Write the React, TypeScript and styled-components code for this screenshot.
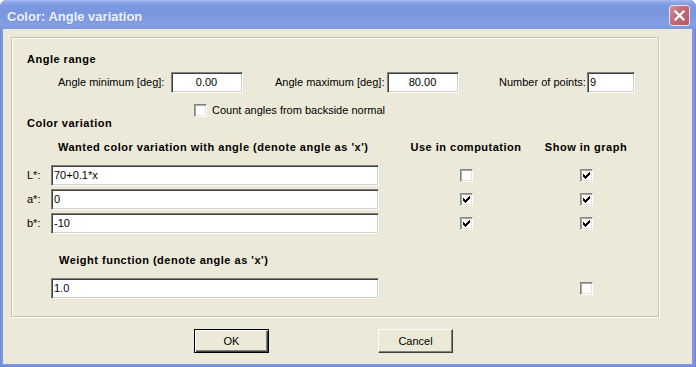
import {Fragment} from "react";
import styled, {createGlobalStyle} from "styled-components";

const GlobalStyle = createGlobalStyle`
    html, body {
        margin: 0;
        padding: 0;
        background: #fff;
    }
    body {
        font-family: "Liberation Sans", Arial, sans-serif;
        font-size: 11px;
        color: #000;
    }
`

type Row = {
    label: string;
    value: string;
    use: boolean;
    show: boolean;
}

const rows: Row[] = [
    {label: "L*:", value: "70+0.1*x", use: false, show: true},
    {label: "a*:", value: "0", use: true, show: true},
    {label: "b*:", value: "-10", use: true, show: true},
];

function CheckBox({checked}: { checked?: boolean }) {
    return <Box>
        {checked &&
            <svg width="7" height="7" viewBox="0 0 7 7" shapeRendering="crispEdges">
                <polygon fill="#000"
                         points="0,2 1,2 1,3 2,3 2,4 3,4 3,3 4,3 4,2 5,2 5,1 6,1 6,0 7,0 7,3 6,3 6,4 5,4 5,5 4,5 4,6 3,6 3,7 2,7 2,6 1,6 1,5 0,5"/>
            </svg>}
    </Box>
}

function App() {
    return <>
        <GlobalStyle/>
        <Window>
            <TitleBar>
                <Title>Color: Angle variation</Title>
                <CloseButton>
                    <svg width="19" height="19" viewBox="0 0 19 19">
                        <path d="M5.5 5.5 L13.5 13.5 M13.5 5.5 L5.5 13.5" stroke="#fff" strokeWidth="2.2"
                              strokeLinecap="square"/>
                    </svg>
                </CloseButton>
            </TitleBar>
            <Frame>
                <GroupBox>
                    <SectionTitle>Angle range</SectionTitle>
                    <RangeRow>
                        <Field $w={185} $gap={31}>
                            <span>Angle minimum [deg]:</span>
                            <TextBox $w={72} $align="center">0.00</TextBox>
                        </Field>
                        <Field $w={184} $gap={32}>
                            <span>Angle maximum [deg]:</span>
                            <TextBox $w={72} $align="center">80.00</TextBox>
                        </Field>
                        <Field $w={136} $gap={40}>
                            <span>Number of points:</span>
                            <TextBox $w={48} $align="left">9</TextBox>
                        </Field>
                    </RangeRow>
                    <CheckRow>
                        <CheckBox/>
                        <span>Count angles from backside normal</span>
                    </CheckRow>
                    <SectionTitle>Color variation</SectionTitle>
                    <ColorGrid>
                        <HeadText $indent={7} $top={0}>Wanted color variation with angle (denote angle as 'x')</HeadText>
                        <ColHead $col={3}>Use in computation</ColHead>
                        <ColHead $col={4}>Show in graph</ColHead>
                        {rows.map(r => <Fragment key={r.label}>
                            <RowLabel>{r.label}</RowLabel>
                            <TextBox $align="left">{r.value}</TextBox>
                            <CheckCell $col={3}><CheckBox checked={r.use}/></CheckCell>
                            <CheckCell $col={4}><CheckBox checked={r.show}/></CheckCell>
                        </Fragment>)}
                        <HeadText $indent={8} $top={17}>Weight function (denote angle as 'x')</HeadText>
                        <RowLabel/>
                        <TextBox $align="left">1.0</TextBox>
                        <CheckCell $col={4}><CheckBox/></CheckCell>
                    </ColorGrid>
                </GroupBox>
                <ButtonRow>
                    <DialogButton $default={true}>OK</DialogButton>
                    <DialogButton>Cancel</DialogButton>
                </ButtonRow>
            </Frame>
        </Window>
    </>
}

export default App;

const Window = styled.div`
    width: 696px;
    height: 367px;
    display: flex;
    flex-direction: column;
    background: #7c97df;
    border-radius: 7px 7px 0 0;
    overflow: hidden;
    box-sizing: border-box;
    box-shadow: inset 1px 0 0 #6f8bd6, inset -1px 0 0 #6a86d2, inset 0 -1px 0 #6a86d2;
`
const TitleBar = styled.div`
    height: 29px;
    flex-shrink: 0;
    display: flex;
    justify-content: space-between;
    align-items: flex-start;
    padding: 5px 6px 0 7px;
    box-sizing: border-box;
    background: linear-gradient(to bottom, #aabdf0 0, #8ea8e8 2px, #7c98e0 6px, #7a96df 45%, #839ee3 80%, #7d98e0 100%);
`
const Title = styled.div`
    margin-top: 4px;
    font-weight: bold;
    font-size: 13px;
    line-height: 16px;
    color: #eef2fb;
    text-shadow: 1px 1px 0 #7490da;
`
const CloseButton = styled.div`
    width: 21px;
    height: 21px;
    box-sizing: border-box;
    display: flex;
    align-items: center;
    justify-content: center;
    border: 1px solid #eadde6;
    border-radius: 3px;
    background: linear-gradient(135deg, #d4909b 0%, #c26b78 45%, #b65665 100%);
`
const Frame = styled.div`
    flex: 1;
    margin: 0 4px 3px 3px;
    padding: 8px 33px 0 8px;
    background: #ece9d8;
    display: flex;
    flex-direction: column;
`
const GroupBox = styled.div`
    display: flex;
    flex-direction: column;
    border: 1px solid #c4c1b1;
    box-shadow: inset 1px 1px 0 #fff, 1px 1px 0 #fff;
    padding: 15px 0 17px 15px;
`
const SectionTitle = styled.div`
    font-weight: bold;
    line-height: 13px;
    letter-spacing: 0.5px;
`
const RangeRow = styled.div`
    display: flex;
    height: 21px;
    margin-top: 6px;
`
const Field = styled.div<{ $w: number; $gap: number }>`
    display: flex;
    align-items: center;
    justify-content: space-between;
    width: ${p => p.$w}px;
    margin-left: ${p => p.$gap}px;
    white-space: nowrap;
    line-height: 13px;
`
const TextBox = styled.div<{ $w?: number; $align: "left" | "center" }>`
    width: ${p => (p.$w ? p.$w + "px" : "auto")};
    height: 21px;
    box-sizing: border-box;
    background: #fff;
    border-style: solid;
    border-width: 1px;
    border-color: #808080 #fff #fff #808080;
    box-shadow: inset 1px 1px 0 #404040, inset -1px -1px 0 #d4d0c8;
    padding: 0 3px 0 2px;
    line-height: 18px;
    text-align: ${p => p.$align};
    white-space: nowrap;
`
const CheckRow = styled.div`
    display: flex;
    align-items: center;
    gap: 5px;
    height: 13px;
    margin-top: 11px;
    margin-left: 167px;
    line-height: 13px;
`
const Box = styled.div`
    width: 13px;
    height: 13px;
    box-sizing: border-box;
    flex-shrink: 0;
    display: flex;
    align-items: center;
    justify-content: center;
    background: #fff;
    border-style: solid;
    border-width: 1px;
    border-color: #858585 #fff #fff #858585;
    box-shadow: inset 1px 1px 0 #a9a79d, inset -1px -1px 0 #e6e4da;
`
const ColorGrid = styled.div`
    display: grid;
    grid-template-columns: 24px 328px 174px 66px;
    row-gap: 3px;
    align-items: center;
    margin-top: 11px;
`
const HeadText = styled.div<{ $indent: number; $top: number }>`
    grid-column: 1 / 3;
    padding-left: ${p => 24 + p.$indent}px;
    margin-top: ${p => p.$top}px;
    margin-bottom: 8px;
    font-weight: bold;
    line-height: 13px;
    letter-spacing: 0.5px;
    white-space: nowrap;
`
const ColHead = styled.div<{ $col: number }>`
    grid-column: ${p => p.$col};
    justify-self: center;
    margin-bottom: 8px;
    font-weight: bold;
    line-height: 13px;
    letter-spacing: 0.5px;
    white-space: nowrap;
`
const RowLabel = styled.div`
    grid-column: 1;
    line-height: 13px;
`
const CheckCell = styled.div<{ $col: number }>`
    grid-column: ${p => p.$col};
    display: flex;
    justify-content: center;
`
const ButtonRow = styled.div`
    display: flex;
    gap: 109px;
    margin-top: 12px;
    padding-left: 183px;
`
const DialogButton = styled.div<{ $default?: boolean }>`
    width: 75px;
    height: 24px;
    box-sizing: border-box;
    display: flex;
    align-items: center;
    justify-content: center;
    background: #ece9d8;
    border-style: solid;
    border-width: 1px;
    border-color: ${p => (p.$default ? "#000" : "#fff #404040 #404040 #fff")};
    box-shadow: ${p => (p.$default
            ? "inset 1px 1px 0 #fff, inset -1px -1px 0 #404040, inset -2px -2px 0 #808080"
            : "inset -1px -1px 0 #808080")};
`
